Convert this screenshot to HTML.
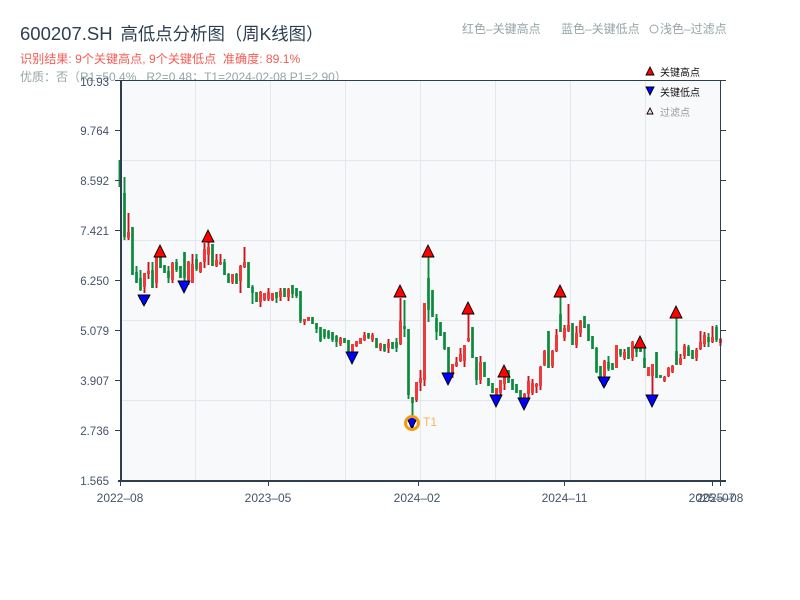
<!DOCTYPE html>
<html lang="zh"><head><meta charset="utf-8"><title>600207.SH</title>
<style>
html,body{margin:0;padding:0;background:#fff;}
body{width:800px;height:600px;overflow:hidden;position:relative;}
svg{position:absolute;left:0;top:0;}
text{font-family:"Liberation Sans","Noto Sans CJK SC",sans-serif;}
</style></head><body>
<svg width="800" height="600" viewBox="0 0 800 600" xmlns="http://www.w3.org/2000/svg">
<text x="20" y="40" font-size="18.5" fill="#2c3e50">600207.SH<tspan x="120.5" font-size="17.4">高低点分析图（周K线图）</tspan></text>
<text x="20" y="63" font-size="12.1" fill="#f25c54">识别结果: 9个关键高点, 9个关键低点&#160;&#160;准确度: 89.1%</text>
<text x="20" y="81" font-size="12" fill="#95a5a6">优质：否（R1=50.4%,&#160;&#160;R2=0.48；T1=2024-02-08 P1=2.90）</text>
<text x="462" y="33" font-size="12" fill="#95a5a6">红色–关键高点</text>
<text x="561" y="33" font-size="12" fill="#95a5a6">蓝色–关键低点</text>
<circle cx="654" cy="29" r="4" fill="none" stroke="#95a5a6" stroke-width="1"/>
<text x="660" y="33" font-size="12" fill="#95a5a6">浅色–过滤点</text>

<rect x="120" y="80" width="600" height="400" fill="#f8f9fb"/>
<g stroke="#e3e6ec" stroke-width="1" shape-rendering="crispEdges">
<path d="M195.5 80V480M270.5 80V480M345.5 80V480M420.5 80V480M495.5 80V480M570.5 80V480M645.5 80V480"/>
<path d="M120 160.5H720M120 240.5H720M120 320.5H720M120 400.5H720"/>
</g>

<g fill="none" stroke="#0a8a3c">
<path stroke-width="1.9" d="M119.5 160V187M124.5 177V240M132.5 227V275M136.5 266V283M140.5 270V291M152.5 262V288M160.5 257V268M164.5 265V273M168.5 266V283M176.5 259V272M180.5 266V278M184.5 252V282M196.5 254V271M212.5 244V266M224.5 259V275M228.5 273V283M236.5 273V284M248.5 262V288M252.5 285V304M256.5 292V302M276.5 292V303M284.5 288V297M292.5 285V298M296.5 288V298M300.5 291V323M312.5 317V324M316.5 323V333M320.5 327V342M324.5 329V339M328.5 330V339M332.5 332V342M336.5 335V347M344.5 338V343M348.5 340V352M368.5 333V339M376.5 338V348M384.5 344V352M392.5 342V349M396.5 338V352M404.5 300V337M408.5 329V399M412.5 397V417M428.5 257V322M432.5 290V317M436.5 314V340M440.5 322V336M444.5 332V350M448.5 347V373M472.5 327V358M476.5 357V385M484.5 362V377M488.5 378V386M492.5 383V393M508.5 370V383M512.5 379V390M516.5 384V393M520.5 390V399M548.5 331V368M560.5 297V332M572.5 323V345M584.5 316V328M588.5 324V341M592.5 336V349M596.5 347V373M600.5 366V377M608.5 356V371M612.5 363V370M620.5 349V357M628.5 347V359M636.5 348V357M640.5 347V352M644.5 348V368M656.5 352V378M660.5 375V378M676.5 318V365M688.5 345V356M692.5 350V359M708.5 333V347M716.5 325V342"/>
<path stroke-width="2.7" d="M124.5 193V237M132.5 227V275M136.5 272V283M140.5 278V290M152.5 270V288M160.5 257V268M164.5 265V273M168.5 271V278M176.5 262V270M180.5 266V278M184.5 252V278M196.5 259V269M212.5 244V266M224.5 262V275M228.5 274V283M236.5 274V284M248.5 262V288M252.5 287V293M256.5 292V302M276.5 292V298M284.5 288V297M292.5 285V294M296.5 288V296M300.5 291V321M312.5 317V324M316.5 323V329M320.5 327V341M324.5 329V337M328.5 331V338M332.5 332V340M336.5 336V342M344.5 338V343M348.5 340V352M368.5 333V338M376.5 338V348M384.5 344V351M392.5 342V349M396.5 342V348M404.5 326V329M408.5 329V395M412.5 397V403M428.5 278V310M432.5 290V317M436.5 318V332M440.5 322V336M444.5 332V349M448.5 347V373M472.5 327V358M476.5 357V380M484.5 362V377M488.5 378V386M492.5 383V393M508.5 370V383M512.5 379V390M516.5 384V393M520.5 390V399M548.5 331V368M560.5 314V332M572.5 323V345M584.5 316V328M588.5 324V341M592.5 336V349M596.5 348V372M600.5 366V377M608.5 362V369M612.5 363V370M620.5 349V355M628.5 347V359M636.5 348V352M640.5 347V352M644.5 358V368M656.5 352V378M660.5 375V378M676.5 351V365M688.5 347V356M692.5 350V359M708.5 337V342M716.5 327V340"/>
</g>
<g fill="none" stroke="#cc1420">
<path stroke-width="1.9" d="M128.5 213V240M144.5 273V293M148.5 262V279M156.5 257V288M172.5 262V283M188.5 261V285M192.5 254V283M200.5 262V273M204.5 243V268M208.5 242V265M216.5 254V267M220.5 254V265M232.5 274V284M240.5 265V293M244.5 247V268M260.5 291V307M264.5 293V301M268.5 288V301M272.5 293V301M280.5 288V301M288.5 288V301M304.5 319V325M308.5 317V321M340.5 337V346M352.5 344V354M356.5 341V347M360.5 338V344M364.5 332V341M372.5 333V342M380.5 343V351M388.5 339V353M400.5 298V345M416.5 382V402M420.5 370V391M424.5 303V386M452.5 364V378M456.5 357V367M460.5 348V362M464.5 345V367M468.5 314V342M480.5 356V384M496.5 388V397M500.5 380V397M504.5 377V390M524.5 393V400M528.5 376V398M532.5 379V395M536.5 383V393M540.5 366V390M544.5 350V366M552.5 350V368M556.5 329V352M564.5 325V341M568.5 304V332M576.5 326V348M580.5 320V337M604.5 360V380M616.5 345V368M624.5 349V360M632.5 341V361M648.5 367V376M652.5 364V395M664.5 376V382M668.5 367V377M672.5 365V373M680.5 354V365M684.5 344V359M696.5 348V361M700.5 331V350M704.5 332V347M712.5 326V343M720.5 338V346"/>
<path id="rb" stroke-width="3" d="M128.5 232V238M144.5 273V287M148.5 271V274M156.5 257V283M172.5 263V280M188.5 262V280M192.5 264V283M200.5 263V272M204.5 249V262M208.5 247V255M216.5 260V266M220.5 262V264M232.5 274V282M240.5 266V281M244.5 262V267M260.5 292V302M264.5 293V300M268.5 292V299M272.5 293V300M280.5 291V297M288.5 289V297M304.5 319V322M308.5 317V321M340.5 338V344M352.5 344V352M356.5 341V346M360.5 338V344M364.5 335V340M372.5 335V340M380.5 344V349M388.5 343V348M400.5 321V344M416.5 382V400M420.5 378V383M424.5 303V380M452.5 364V374M456.5 362V366M460.5 354V361M464.5 345V361M468.5 338V341M480.5 362V380M496.5 388V396M500.5 380V393M504.5 377V384M524.5 394V399M528.5 381V394M532.5 383V393M536.5 384V387M540.5 367V386M544.5 351V365M552.5 351V366M556.5 335V351M564.5 328V338M568.5 325V331M576.5 333V345M580.5 321V333M604.5 361V376M616.5 345V368M624.5 352V358M632.5 342V358M648.5 367V376M652.5 364V376M664.5 377V381M668.5 368V376M672.5 366V372M680.5 358V364M684.5 346V356M696.5 350V358M700.5 342V349M704.5 335V344M712.5 337V342M720.5 339V343"/>
<use href="#rb" style="stroke:#f03a3a;stroke-width:1"/>
</g>

<g shape-rendering="crispEdges" stroke="#2c3e50" fill="none">
<path stroke-width="1" d="M120 80.5H726M720.5 80V482"/>
<path stroke-width="2" d="M121 80V482M118 481H726"/>
<path stroke-width="1" d="M115 80.5H120M115 130.5H120M115 180.5H120M115 230.5H120M115 280.5H120M115 330.5H120M115 380.5H120M115 430.5H120"/>
<path stroke-width="1" d="M720 130.5H726M720 180.5H726M720 230.5H726M720 280.5H726M720 330.5H726M720 380.5H726M720 430.5H726"/>
<path stroke-width="1" d="M120.5 482V486M268.5 482V486M418.5 482V486M564.5 482V486M712.5 482V486M720.5 482V486"/>
</g>

<g font-size="11.5" fill="#44546a" text-anchor="end">
<text x="109" y="86">10.93</text>
<text x="109" y="135">9.764</text>
<text x="109" y="185">8.592</text>
<text x="109" y="235">7.421</text>
<text x="109" y="285">6.250</text>
<text x="109" y="335">5.079</text>
<text x="109" y="385">3.907</text>
<text x="109" y="435">2.736</text>
<text x="109" y="485">1.565</text>
</g>
<g font-size="12" fill="#44546a" text-anchor="middle">
<text x="120" y="502">2022–08</text>
<text x="268" y="502">2023–05</text>
<text x="417" y="502">2024–02</text>
<text x="564.5" y="502">2024–11</text>
<text x="712" y="502">2025–07</text>
<text x="720" y="502">2025–08</text>
</g>

<g fill="#ff0000" stroke="#000" stroke-width="1" shape-rendering="crispEdges">
<path d="M154 257H166L160 245ZM202 242H214L208 230ZM394 297H406L400 285ZM422 257H434L428 245ZM462 314H474L468 302ZM498 377H510L504 365ZM554 297H566L560 285ZM634 348H646L640 336ZM670 318H682L676 306Z"/>
<path fill="#0000ff" d="M138 295H150L144 306ZM178 281H190L184 293ZM346 352H358L352 364ZM407 418H417L412 429ZM442 373H454L448 385ZM490 395H502L496 407ZM518 398H530L524 410ZM598 377H610L604 388ZM646 395H658L652 407Z"/>
</g>
<circle cx="412" cy="423" r="6.5" fill="none" stroke="#f39c12" stroke-width="3"/>
<text x="423" y="426" font-size="12" fill="#f5b55a">T1</text>

<g shape-rendering="crispEdges" stroke="#000" stroke-width="1">
<path fill="#ff0000" d="M646 75H654L650 67Z"/>
<path fill="#0000ff" d="M646 87H654L650 95Z"/>
<path fill="#ffd6d6" d="M647 114H653L650 108Z"/>
</g>
<text x="660" y="76" font-size="10" fill="#111">关键高点</text>
<text x="660" y="96" font-size="10" fill="#111">关键低点</text>
<text x="660" y="116" font-size="10" fill="#999">过滤点</text>
</svg>
</body></html>
